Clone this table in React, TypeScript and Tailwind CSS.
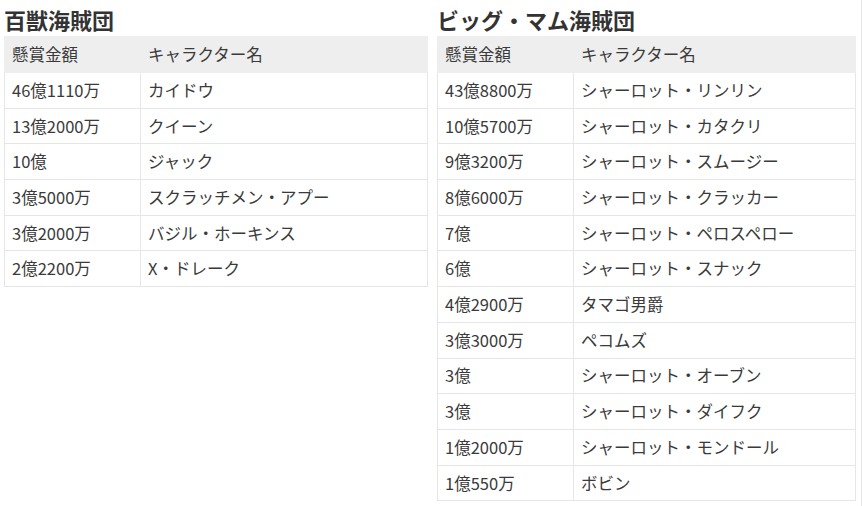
import React from 'react';

type Row = [string, string];

const hyakujuu: Row[] = [
  ['46億1110万', 'カイドウ'],
  ['13億2000万', 'クイーン'],
  ['10億', 'ジャック'],
  ['3億5000万', 'スクラッチメン・アプー'],
  ['3億2000万', 'バジル・ホーキンス'],
  ['2億2200万', 'X・ドレーク'],
];

const bigMom: Row[] = [
  ['43億8800万', 'シャーロット・リンリン'],
  ['10億5700万', 'シャーロット・カタクリ'],
  ['9億3200万', 'シャーロット・スムージー'],
  ['8億6000万', 'シャーロット・クラッカー'],
  ['7億', 'シャーロット・ペロスペロー'],
  ['6億', 'シャーロット・スナック'],
  ['4億2900万', 'タマゴ男爵'],
  ['3億3000万', 'ペコムズ'],
  ['3億', 'シャーロット・オーブン'],
  ['3億', 'シャーロット・ダイフク'],
  ['1億2000万', 'シャーロット・モンドール'],
  ['1億550万', 'ボビン'],
];

const BountyTable: React.FC<{ title: string; rows: Row[]; width: string }> = ({ title, rows, width }) => (
  <div className={width}>
    <div className="h-9 flex items-center pt-[3px] text-[22px] font-bold text-[#333]">
      {title}
    </div>
    <table className="w-full border-collapse text-[16.5px] text-[#3a3a3a]">
      <thead>
        <tr className="h-[36px] bg-[#eeeeee]">
          <th className="w-[136px] pl-[7px] pr-2 text-left font-normal border border-[#eeeeee]">懸賞金額</th>
          <th className="pl-[7px] pr-2 text-left font-normal border border-[#eeeeee]">キャラクター名</th>
        </tr>
      </thead>
      <tbody>
        {rows.map((r, i) => (
          <tr key={i} className="h-[35.7px]">
            <td className="pl-[7px] pr-2 border border-[#e6e6e6]">{r[0]}</td>
            <td className="pl-[7px] pr-2 border border-[#e6e6e6]">{r[1]}</td>
          </tr>
        ))}
      </tbody>
    </table>
  </div>
);

export default function App() {
  return (
    <div
      className="w-[866px] h-[506px] bg-white overflow-hidden"
      style={{ fontFamily: '"Noto Sans CJK JP", "Noto Sans", sans-serif' }}
    >
      <div className="flex w-[862px] h-full pl-1 gap-[9px] border-r border-[#e6e6e6]">
        <BountyTable title="百獣海賊団" rows={hyakujuu} width="w-[424px]" />
        <BountyTable title="ビッグ・マム海賊団" rows={bigMom} width="w-[419px]" />
      </div>
    </div>
  );
}
